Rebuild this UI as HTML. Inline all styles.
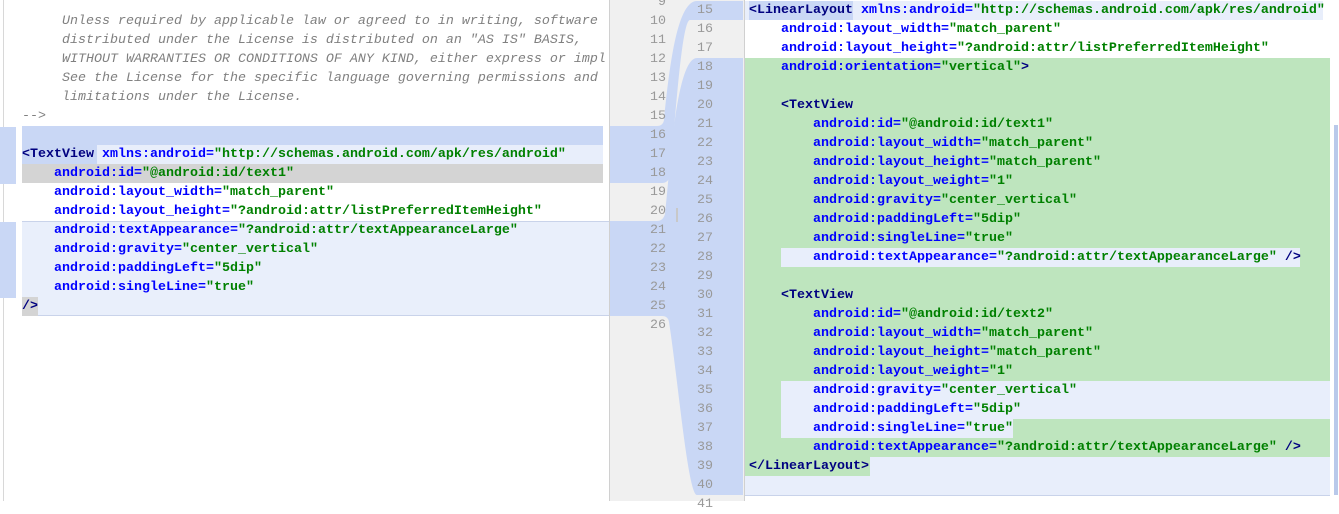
<!DOCTYPE html>
<html><head><meta charset="utf-8"><style>
*{margin:0;padding:0;box-sizing:border-box}
body{width:1339px;height:501px;overflow:hidden;background:#fff;position:relative;font-family:"Liberation Mono",monospace;font-size:13.33px;}
.r{position:absolute;height:19px;line-height:19px;white-space:pre;}
.t{position:absolute;height:19px;line-height:19px;white-space:pre;font-weight:bold;}
.c{color:#808080;font-style:italic;font-weight:normal}
.a{color:#0000ff}.v{color:#008000}.g{color:#000080}
.n{position:absolute;height:19px;line-height:19px;color:#999;font-size:13.33px}
.ln{width:56px;text-align:right;left:610px}
.rn{left:697px}
</style></head><body>
<div class="r" style="left:22px;top:126px;width:581px;background:#c9d7f5"></div>
<div class="r" style="left:22px;top:145px;width:581px;background:#e8eefb"></div>
<div class="r" style="left:22px;top:145px;width:75px;background:#c9d7f5"></div>
<div class="r" style="left:22px;top:164px;width:581px;background:#d4d4d4"></div>
<div class="r" style="left:22px;top:221px;width:587px;height:95px;background:#e9effb;border-top:1px solid #c9d3ea;border-bottom:1px solid #c9d3ea"></div>
<div class="r" style="left:22px;top:297px;width:16px;background:#d4d4d4"></div>
<div style="position:absolute;left:3px;top:0;width:1px;height:501px;background:#d8d8d8"></div>
<div style="position:absolute;left:0;top:127px;width:16px;height:57px;background:#c9d7f5"></div>
<div style="position:absolute;left:0;top:222px;width:16px;height:76px;background:#c9d7f5"></div>
<div class="t c" style="left:22px;top:12px">     Unless required by applicable law or agreed to in writing, software</div>
<div class="t c" style="left:22px;top:31px">     distributed under the License is distributed on an "AS IS" BASIS,</div>
<div class="t c" style="left:22px;top:50px">     WITHOUT WARRANTIES OR CONDITIONS OF ANY KIND, either express or impl</div>
<div class="t c" style="left:22px;top:69px">     See the License for the specific language governing permissions and</div>
<div class="t c" style="left:22px;top:88px">     limitations under the License.</div>
<div class="t c" style="left:22px;top:107px">--&gt;</div>
<div class="t" style="left:22px;top:145px"><span class="g">&lt;TextView</span> <span class="a">xmlns:android=</span><span class="v">"http://schemas.android.com/apk/res/android"</span></div>
<div class="t" style="left:22px;top:164px">    <span class="a">android:id=</span><span class="v">"@android:id/text1"</span></div>
<div class="t" style="left:22px;top:183px">    <span class="a">android:layout_width=</span><span class="v">"match_parent"</span></div>
<div class="t" style="left:22px;top:202px">    <span class="a">android:layout_height=</span><span class="v">"?android:attr/listPreferredItemHeight"</span></div>
<div class="t" style="left:22px;top:221px">    <span class="a">android:textAppearance=</span><span class="v">"?android:attr/textAppearanceLarge"</span></div>
<div class="t" style="left:22px;top:240px">    <span class="a">android:gravity=</span><span class="v">"center_vertical"</span></div>
<div class="t" style="left:22px;top:259px">    <span class="a">android:paddingLeft=</span><span class="v">"5dip"</span></div>
<div class="t" style="left:22px;top:278px">    <span class="a">android:singleLine=</span><span class="v">"true"</span></div>
<div class="t" style="left:22px;top:297px"><span class="g">/&gt;</span></div>
<div style="position:absolute;left:609px;top:0;width:136px;height:501px;background:#f0f0f0;border-left:1px solid #d0d0d0;border-right:1px solid #d0d0d0"></div>
<svg style="position:absolute;left:0;top:0" width="1339" height="501">
<path d="M610 126 L657 126 Q663 126 664 120 C670 60 678 1 697 1 L743 1 L743 20 L690 20 C682 20 676 110 670 176 Q668 183 662 183 L610 183 Z" fill="#c9d7f5"/>
<path d="M610 221 L657 221 Q663 221 665 214 C670 170 676 58 697 58 L743 58 L743 495 L697 495 C688 495 678 380 669 322 Q668 316 662 316 L610 316 Z" fill="#c9d7f5"/>
<rect x="676" y="208" width="2" height="14" fill="#c8c8c8"/>
</svg>
<div class="n ln" style="top:-7px">9</div>
<div class="n ln" style="top:12px">10</div><div class="n ln" style="top:31px">11</div><div class="n ln" style="top:50px">12</div><div class="n ln" style="top:69px">13</div><div class="n ln" style="top:88px">14</div><div class="n ln" style="top:107px">15</div><div class="n ln" style="top:126px">16</div><div class="n ln" style="top:145px">17</div><div class="n ln" style="top:164px">18</div><div class="n ln" style="top:183px">19</div><div class="n ln" style="top:202px">20</div><div class="n ln" style="top:221px">21</div><div class="n ln" style="top:240px">22</div><div class="n ln" style="top:259px">23</div><div class="n ln" style="top:278px">24</div><div class="n ln" style="top:297px">25</div><div class="n ln" style="top:316px">26</div>
<div class="n rn" style="top:1px">15</div><div class="n rn" style="top:20px">16</div><div class="n rn" style="top:39px">17</div><div class="n rn" style="top:58px">18</div><div class="n rn" style="top:77px">19</div><div class="n rn" style="top:96px">20</div><div class="n rn" style="top:115px">21</div><div class="n rn" style="top:134px">22</div><div class="n rn" style="top:153px">23</div><div class="n rn" style="top:172px">24</div><div class="n rn" style="top:191px">25</div><div class="n rn" style="top:210px">26</div><div class="n rn" style="top:229px">27</div><div class="n rn" style="top:248px">28</div><div class="n rn" style="top:267px">29</div><div class="n rn" style="top:286px">30</div><div class="n rn" style="top:305px">31</div><div class="n rn" style="top:324px">32</div><div class="n rn" style="top:343px">33</div><div class="n rn" style="top:362px">34</div><div class="n rn" style="top:381px">35</div><div class="n rn" style="top:400px">36</div><div class="n rn" style="top:419px">37</div><div class="n rn" style="top:438px">38</div><div class="n rn" style="top:457px">39</div><div class="n rn" style="top:476px">40</div><div class="n rn" style="top:495px">41</div>
<div class="r" style="left:745px;top:1px;width:578px;background:#e8eefb"></div>
<div class="r" style="left:749px;top:1px;width:104px;background:#c9d7f5"></div>
<div class="r" style="left:745px;top:58px;width:585px;height:418px;background:#bee5be"></div>
<div class="r" style="left:781px;top:248px;width:519px;background:#e8eefb"></div>
<div class="r" style="left:781px;top:381px;width:549px;height:38px;background:#e8eefb"></div>
<div class="r" style="left:781px;top:419px;width:232px;background:#e8eefb"></div>
<div class="r" style="left:870px;top:457px;width:460px;background:#e8eefb"></div>
<div class="r" style="left:745px;top:476px;width:585px;background:#e8eefb;border-bottom:1px solid #c9d3ea;height:20px"></div>
<div style="position:absolute;left:1334px;top:125px;width:4px;height:370px;background:#b9c9ea"></div>
<div class="t" style="left:749px;top:1px"><span class="g">&lt;LinearLayout</span> <span class="a">xmlns:android=</span><span class="v">"http://schemas.android.com/apk/res/android"</span></div>
<div class="t" style="left:749px;top:20px">    <span class="a">android:layout_width=</span><span class="v">"match_parent"</span></div>
<div class="t" style="left:749px;top:39px">    <span class="a">android:layout_height=</span><span class="v">"?android:attr/listPreferredItemHeight"</span></div>
<div class="t" style="left:749px;top:58px">    <span class="a">android:orientation=</span><span class="v">"vertical"</span><span class="g">&gt;</span></div>
<div class="t" style="left:749px;top:96px">    <span class="g">&lt;TextView</span></div>
<div class="t" style="left:749px;top:115px">        <span class="a">android:id=</span><span class="v">"@android:id/text1"</span></div>
<div class="t" style="left:749px;top:134px">        <span class="a">android:layout_width=</span><span class="v">"match_parent"</span></div>
<div class="t" style="left:749px;top:153px">        <span class="a">android:layout_height=</span><span class="v">"match_parent"</span></div>
<div class="t" style="left:749px;top:172px">        <span class="a">android:layout_weight=</span><span class="v">"1"</span></div>
<div class="t" style="left:749px;top:191px">        <span class="a">android:gravity=</span><span class="v">"center_vertical"</span></div>
<div class="t" style="left:749px;top:210px">        <span class="a">android:paddingLeft=</span><span class="v">"5dip"</span></div>
<div class="t" style="left:749px;top:229px">        <span class="a">android:singleLine=</span><span class="v">"true"</span></div>
<div class="t" style="left:749px;top:248px">        <span class="a">android:textAppearance=</span><span class="v">"?android:attr/textAppearanceLarge"</span> <span class="g">/&gt;</span></div>
<div class="t" style="left:749px;top:286px">    <span class="g">&lt;TextView</span></div>
<div class="t" style="left:749px;top:305px">        <span class="a">android:id=</span><span class="v">"@android:id/text2"</span></div>
<div class="t" style="left:749px;top:324px">        <span class="a">android:layout_width=</span><span class="v">"match_parent"</span></div>
<div class="t" style="left:749px;top:343px">        <span class="a">android:layout_height=</span><span class="v">"match_parent"</span></div>
<div class="t" style="left:749px;top:362px">        <span class="a">android:layout_weight=</span><span class="v">"1"</span></div>
<div class="t" style="left:749px;top:381px">        <span class="a">android:gravity=</span><span class="v">"center_vertical"</span></div>
<div class="t" style="left:749px;top:400px">        <span class="a">android:paddingLeft=</span><span class="v">"5dip"</span></div>
<div class="t" style="left:749px;top:419px">        <span class="a">android:singleLine=</span><span class="v">"true"</span></div>
<div class="t" style="left:749px;top:438px">        <span class="a">android:textAppearance=</span><span class="v">"?android:attr/textAppearanceLarge"</span> <span class="g">/&gt;</span></div>
<div class="t" style="left:749px;top:457px"><span class="g">&lt;/LinearLayout&gt;</span></div>
</body></html>
